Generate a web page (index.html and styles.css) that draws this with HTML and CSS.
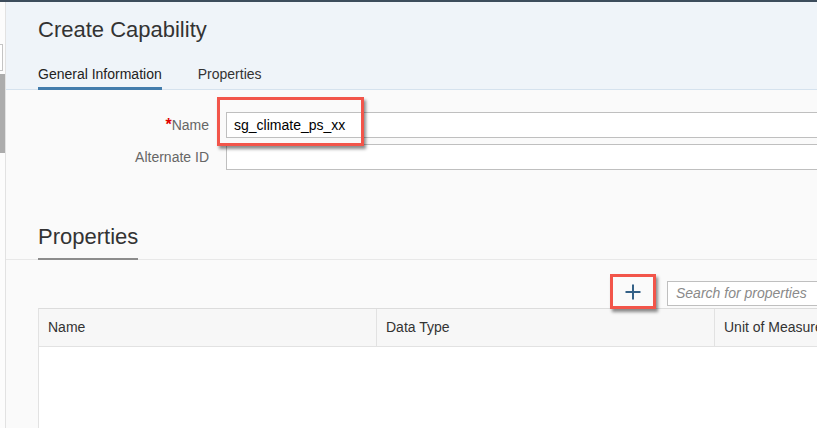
FILE: index.html
```html
<!DOCTYPE html>
<html lang="en">
<head>
<meta charset="utf-8">
<title>Create Capability</title>
<link rel="stylesheet" href="styles.css">
</head>
<body>
<div class="app">
  <aside class="side">
    <div class="side-input"></div>
    <div class="side-scroll"></div>
  </aside>
  <main class="main">
    <header class="head">
      <h1 class="title">Create Capability</h1>
      <nav class="tabs">
        <span class="tab active">General Information</span>
        <span class="tab">Properties</span>
      </nav>
    </header>

    <section class="form">
      <div class="row">
        <label class="label"><span class="req">*</span>Name</label>
        <div class="field">
          <div class="input">sg_climate_ps_xx</div>
          <div class="mark mark-name"></div>
        </div>
      </div>
      <div class="row">
        <label class="label">Alternate ID</label>
        <div class="field">
          <div class="input"></div>
        </div>
      </div>
    </section>

    <section class="props">
      <div class="props-head">
        <h2 class="props-title">Properties</h2>
      </div>
      <div class="toolbar">
        <button class="add" type="button" aria-label="Add">
          <svg width="16" height="16" viewBox="0 0 16 16"><path d="M8 0.5V15.5M0.5 8H15.5" stroke="#346187" stroke-width="2" fill="none"/></svg>
        </button>
        <div class="search">Search for properties</div>
      </div>
      <div class="table">
        <div class="thead">
          <div class="th">Name</div>
          <div class="th">Data Type</div>
          <div class="th">Unit of Measure</div>
        </div>
        <div class="tbody"></div>
      </div>
    </section>
  </main>
</div>
</body>
</html>
```

FILE: styles.css
```css
* { box-sizing: border-box; }

html, body {
  margin: 0;
  padding: 0;
  height: 100%;
  overflow: hidden;
}

body {
  font-family: "Liberation Sans", Arial, sans-serif;
  color: #333;
  background: #fafafa;
  border-top: 2px solid #3d4d5c;
}

.app {
  display: flex;
  height: 100%;
  width: 1100px;
}

.side {
  width: 6px;
  flex: none;
  background: #fcfcfc;
  border-right: 1px solid #e2e2e2;
  padding-top: 42px;
}

.side-input {
  width: 3px;
  height: 27px;
  border: 1px solid #c4c4c4;
  border-left: none;
  background: #fff;
}

.side-scroll {
  margin-top: 3px;
  width: 5px;
  height: 79px;
  background: #acacac;
}

.main {
  flex: 1;
  display: flex;
  flex-direction: column;
}

.head {
  background: #eff4f9;
  padding: 14px 0 0 32px;
  box-shadow: inset 0 -1px 0 #d5e2ee;
  height: 88px;
}

.title {
  margin: 0;
  font-size: 22px;
  font-weight: normal;
  line-height: 28px;
  color: #333;
}

.tabs {
  display: flex;
  gap: 36px;
  margin-top: 16px;
}

.tab {
  font-size: 14px;
  line-height: 20px;
  padding: 4px 0 3px;
  border-bottom: 3px solid transparent;
  color: #333;
}

.tab.active {
  border-bottom-color: #427cac;
  color: #222;
}

.form {
  padding: 22px 0 0 0;
  display: flex;
  flex-direction: column;
  gap: 6px;
  height: 133px;
}

.row {
  display: flex;
  align-items: center;
  height: 26px;
}

.label {
  width: 204px;
  text-align: right;
  padding-right: 1px;
  font-size: 14px;
  color: #666;
}

.req {
  color: #e00000;
  font-size: 16px;
  font-weight: bold;
}

.field {
  position: relative;
  margin-left: 16px;
  flex: 1;
  height: 26px;
}

.input {
  height: 26px;
  background: #fff;
  border: 1px solid #bfbfbf;
  font-size: 14px;
  line-height: 24px;
  padding-left: 7px;
  color: #000;
}

.mark {
  position: absolute;
  border: 3px solid #f2554a;
  box-shadow: 2px 3px 3px rgba(0, 0, 0, 0.45);
  z-index: 2;
}

.mark-name {
  left: -9px;
  top: -15px;
  width: 147px;
  height: 49px;
}

.props {
  padding-left: 32px;
  display: flex;
  flex-direction: column;
  flex: 1;
}

.props-head {
  border-bottom: 1px solid #e8e8e8;
  margin-left: -32px;
  padding-left: 32px;
}

.props-title {
  display: inline-block;
  margin: 0 0 -1px 0;
  font-size: 22px;
  font-weight: normal;
  line-height: 28px;
  padding-bottom: 7px;
  border-bottom: 2px solid #8c8c8c;
  color: #333;
}

.toolbar {
  display: flex;
  align-items: flex-start;
  height: 48px;
  padding-left: 572px;
}

.add {
  position: relative;
  z-index: 2;
  margin-top: 14px;
  width: 46px;
  height: 35px;
  background: transparent;
  border: 3px solid #f2554a;
  box-shadow: 2px 3px 3px rgba(0, 0, 0, 0.45);
  padding: 0;
  display: flex;
  align-items: center;
  justify-content: center;
}

.search {
  margin-top: 21px;
  margin-left: 11px;
  width: 300px;
  height: 25px;
  background: #fff;
  border: 1px solid #bfbfbf;
  font-size: 14px;
  font-style: italic;
  line-height: 23px;
  padding-left: 8px;
  color: #8a8a8a;
}

.table {
  border-left: 1px solid #e2e2e2;
  border-top: 1px solid #dcdcdc;
  flex: 1;
  background: #fff;
  width: 1014px;
}

.thead {
  display: grid;
  grid-template-columns: 338px 338px 338px;
  height: 38px;
  background: #f7f7f7;
  border-bottom: 1px solid #e2e2e2;
}

.th {
  font-size: 14px;
  line-height: 37px;
  padding-left: 9px;
  color: #333;
  border-right: 1px solid #e2e2e2;
}

.tbody {
  background: #fff;
}
```
